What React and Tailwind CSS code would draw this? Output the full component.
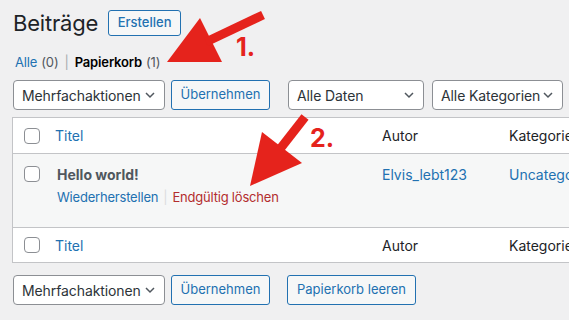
import React from "react";

const font = { fontFamily: "Inter, 'Liberation Sans', sans-serif" };

function Chevron() {
  return (
    <svg width="12" height="8" viewBox="0 0 12 8" className="shrink-0">
      <path d="M2 2 L6 6 L10 2" fill="none" stroke="#50575e" strokeWidth="1.5" />
    </svg>
  );
}

function Select({ label, w }) {
  return (
    <div
      className={`flex items-center justify-between h-[30px] bg-white border border-[#8c8f94] rounded-[4px] pl-[8px] pr-[8px] text-[14px] text-[#2c3338] ${w}`}
    >
      <span className="tracking-[-0.1px]">{label}</span>
      <Chevron />
    </div>
  );
}

function Btn({ label, w }) {
  return (
    <div
      className={`flex items-center justify-center h-[30px] bg-[#f6f7f7] border border-[#2271b1] rounded-[3px] text-[13px] text-[#2271b1] ${w}`}
    >
      {label}
    </div>
  );
}

function Check() {
  return <div className="w-[16px] h-[16px] shrink-0 rounded-[4px] border border-[#8c8f94] bg-white" />;
}

export default function App() {
  return (
    <div style={font} className="relative w-[569px] h-[320px] overflow-hidden bg-[#f0f0f1]">
      <div className="pl-[13px] pt-[10px]">
        <div className="flex items-center h-[26px] gap-[10px]">
          <h1 className="text-[22px] leading-none text-[#1d2327] tracking-[-0.2px]">Beiträge</h1>
          <div className="flex items-center justify-center h-[26px] w-[73px] border border-[#2271b1] rounded-[3px] bg-[#f6f7f7] text-[13px] font-medium text-[#2271b1]">
            Erstellen
          </div>
        </div>
        <div className="mt-[19px] h-[15px] flex items-center text-[13px] text-[#50575e] pl-[2px] tracking-[-0.15px]">
          <span className="text-[#2271b1]">Alle</span>
          <span className="ml-[4px]">(0)</span>
          <span className="mx-[6px] text-[#a7aaad]">|</span>
          <span className="font-semibold text-[#000]">Papierkorb</span>
          <span className="ml-[4px]">(1)</span>
        </div>
        <div className="mt-[10px] flex items-center">
          <Select label="Mehrfachaktionen" w="w-[152px]" />
          <div className="w-[6px]" />
          <Btn label="Übernehmen" w="w-[99px]" />
          <div className="w-[18px]" />
          <Select label="Alle Daten" w="w-[136px]" />
          <div className="w-[8px]" />
          <Select label="Alle Kategorien" w="w-[131px]" />
        </div>
      </div>

      <div className="ml-[12px] mt-[7px] w-[600px] bg-white border border-[#c3c4c7] text-[14px]">
        <div className="flex items-center h-[36px] border-b border-[#c3c4c7]">
          <div className="pl-[11px] w-[42px]"><Check /></div>
          <div className="w-[327px] text-[#2271b1]">Titel</div>
          <div className="w-[127px] text-[#1d2327]">Autor</div>
          <div className="text-[#1d2327]">Kategorie</div>
        </div>
        <div className="flex items-start h-[74px] bg-[#f6f7f7] border-b border-[#c3c4c7] pt-[12px]">
          <div className="pl-[11px] w-[44px]"><Check /></div>
          <div className="w-[325px]">
            <div className="font-bold text-[#50575e] leading-[18px]">Hello world!</div>
            <div className="mt-[4px] text-[13px] leading-[18px] flex items-center tracking-[-0.2px]">
              <span className="text-[#2271b1]">Wiederherstellen</span>
              <span className="mx-[5px] text-[#dcdcde]">|</span>
              <span className="text-[#b32d2e]">Endgültig löschen</span>
            </div>
          </div>
          <div className="w-[127px] text-[#2271b1] leading-[18px]">Elvis_lebt123</div>
          <div className="text-[#2271b1] leading-[18px]">Uncategorized</div>
        </div>
        <div className="flex items-center h-[34px]">
          <div className="pl-[11px] w-[42px]"><Check /></div>
          <div className="w-[327px] text-[#2271b1]">Titel</div>
          <div className="w-[127px] text-[#1d2327]">Autor</div>
          <div className="text-[#1d2327]">Kategorie</div>
        </div>
      </div>

      <div className="pl-[13px] mt-[12px] flex items-center">
        <Select label="Mehrfachaktionen" w="w-[152px]" />
        <div className="w-[6px]" />
        <Btn label="Übernehmen" w="w-[99px]" />
        <div className="w-[17px]" />
        <Btn label="Papierkorb leeren" w="w-[129px]" />
      </div>

      <svg className="absolute left-0 top-0 pointer-events-none" width="569" height="320">
        <polygon points="167,62 200,18 222,62" fill="#e5231c" />
        <line x1="206" y1="42" x2="263" y2="15" stroke="#e5231c" strokeWidth="9" />
        <polygon points="250,186 262,132 302,163" fill="#e5231c" />
        <line x1="280" y1="149" x2="305" y2="117" stroke="#e5231c" strokeWidth="9" />
      </svg>
      <div className="absolute left-[236px] top-[35px] text-[25px] font-bold leading-none text-[#e5231c]">1.</div>
      <div className="absolute left-[310px] top-[126px] text-[25px] font-bold leading-none text-[#e5231c]">2.</div>
    </div>
  );
}
